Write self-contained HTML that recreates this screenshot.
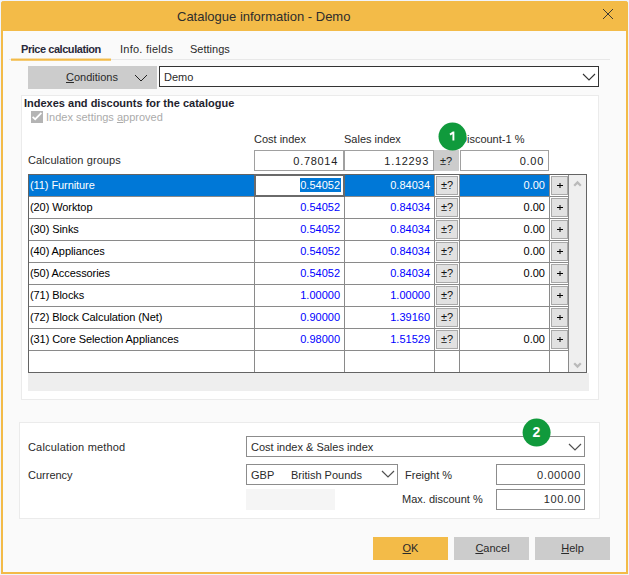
<!DOCTYPE html>
<html><head><meta charset="utf-8">
<style>
*{box-sizing:border-box;margin:0;padding:0}
html,body{width:629px;height:575px;overflow:hidden;background:#f0f4fc}
body{position:relative;font-family:"Liberation Sans",sans-serif;font-size:11px;color:#2a2a2a}
.a{position:absolute}
.t{position:absolute;white-space:nowrap;line-height:13px}
#win{left:1px;top:1px;width:627px;height:573px;background:#fafafa;border:2px solid #f3bb48;border-top:0;border-radius:3px 3px 0 0}
#title{left:1px;top:1px;width:627px;height:30px;background:#f3bb48;border-radius:3px 3px 0 0}
.panel{background:#fff;border:1px solid #ebebeb}
.btn{background:#ccc;text-align:center}
.inp{background:#fff;border:1px solid #8c8c8c}
.cell{position:absolute;overflow:hidden}
.num{text-align:right;padding-right:5px;color:#00f}
.pb{position:absolute;background:#e1e1e1;border:1px solid #a9a9a9;text-align:center;color:#111}
</style></head><body>
<div id="win" class="a"></div>
<div id="title" class="a"></div>
<div class="t" style="left:177px;top:10px;font-size:13px;line-height:13px;color:#2d2d2d">Catalogue information - Demo</div>
<svg class="a" style="left:602px;top:8px" width="12" height="12" viewBox="0 0 12 12"><path d="M1 1L11 11M11 1L1 11" stroke="#333" stroke-width="0.95" fill="none"/></svg>

<!-- tabs -->
<div class="a" style="left:9px;top:59px;width:601px;height:1px;background:#e8e8e8"></div>
<div class="a" style="left:11px;top:58px;width:100px;height:3px;background:linear-gradient(rgba(243,187,72,.45) 0 1px,#f3bb48 1px 2px,rgba(243,187,72,.75) 2px 3px)"></div>
<div class="t" style="left:21px;top:43px;font-weight:bold;letter-spacing:-0.45px;color:#2a2a3a">Price calculation</div>
<div class="t" style="left:120px;top:43px;letter-spacing:0.25px">Info. fields</div>
<div class="t" style="left:190px;top:43px">Settings</div>

<!-- conditions -->
<div class="a btn" style="left:28px;top:66px;width:129px;height:23px"></div>
<div class="t" style="left:66px;top:71px"><u>C</u>onditions</div>
<svg class="a" style="left:134px;top:73.5px" width="14" height="8" viewBox="0 0 14 8"><path d="M1 1L7 7L13 1" stroke="#222" stroke-width="1" fill="none"/></svg>
<div class="a inp" style="left:159px;top:66px;width:440px;height:21px;border-color:#333"></div>
<div class="t" style="left:164px;top:71px">Demo</div>
<svg class="a" style="left:582px;top:72.5px" width="14" height="8" viewBox="0 0 14 8"><path d="M1 1L7 7L13 1" stroke="#333" stroke-width="1.1" fill="none"/></svg>

<!-- panel 1 -->
<div class="a panel" style="left:21px;top:95px;width:578px;height:305px"></div>
<div class="t" style="left:24px;top:97px;font-weight:bold;color:#1e1e2e">Indexes and discounts for the catalogue</div>
<div class="a" style="left:31px;top:111px;width:12px;height:12px;background:#b4b4b4"></div>
<svg class="a" style="left:31px;top:111px" width="12" height="12" viewBox="0 0 12 12"><path d="M1.6 5.8L4.2 8.2L10.4 1.9" stroke="#fff" stroke-width="1.7" fill="none"/></svg>
<div class="t" style="left:46px;top:111px;color:#ababab">Index settings <u>a</u>pproved</div>

<div class="t" style="left:28px;top:154px;letter-spacing:0.1px">Calculation groups</div>
<div class="t" style="left:254px;top:133px">Cost index</div>
<div class="t" style="left:344px;top:133px">Sales index</div>
<div class="t" style="left:459px;top:133px">Discount-1 %</div>
<div class="a" style="left:254px;top:150px;width:90px;height:21px;background:#fff;border:1px solid #a0a0a0"></div>
<div class="a" style="left:344px;top:150px;width:90px;height:21px;background:#fff;border:1px solid #a0a0a0"></div>
<div class="a" style="left:434px;top:150px;width:25px;height:21px;background:#ccc"></div>
<div class="a" style="left:460px;top:150px;width:89px;height:21px;background:#fff;border:1px solid #a0a0a0"></div>
<div class="t" style="left:255px;top:155px;width:83px;text-align:right;color:#222;letter-spacing:0.7px">0.78014</div>
<div class="t" style="left:345px;top:155px;width:84px;text-align:right;color:#222;letter-spacing:0.7px">1.12293</div>
<div class="t" style="left:434px;top:155px;width:24px;text-align:center;color:#222">&plusmn;?</div>
<div class="t" style="left:460px;top:155px;width:84px;text-align:right;color:#222;letter-spacing:0.7px">0.00</div>
<svg class="a" style="left:0;top:0" width="629" height="575"><circle cx="452.5" cy="136.6" r="14" fill="#109a3c"/><path d="M453.4 131.6V140.6M453.4 132.2L450 134.6" stroke="#fff" stroke-width="1.9" fill="none"/></svg>
<div class="a" style="left:28px;top:174px;width:559px;height:199px;background:#fff"></div>
<div class="a" style="left:29px;top:175px;width:405px;height:21px;background:#0078d7"></div>
<div class="a" style="left:460px;top:175px;width:89px;height:21px;background:#0078d7"></div>
<div class="a" style="left:29px;top:196px;width:540px;height:1px;background:#8a8a8a"></div>
<div class="a" style="left:29px;top:218px;width:540px;height:1px;background:#8a8a8a"></div>
<div class="a" style="left:29px;top:240px;width:540px;height:1px;background:#8a8a8a"></div>
<div class="a" style="left:29px;top:262px;width:540px;height:1px;background:#8a8a8a"></div>
<div class="a" style="left:29px;top:284px;width:540px;height:1px;background:#8a8a8a"></div>
<div class="a" style="left:29px;top:306px;width:540px;height:1px;background:#8a8a8a"></div>
<div class="a" style="left:29px;top:328px;width:540px;height:1px;background:#8a8a8a"></div>
<div class="a" style="left:29px;top:350px;width:540px;height:1px;background:#8a8a8a"></div>
<div class="a" style="left:434px;top:196px;width:26px;height:1px;background:#8a8a8a"></div>
<div class="a" style="left:549px;top:196px;width:20px;height:1px;background:#8a8a8a"></div>
<div class="a" style="left:254px;top:197px;width:1px;height:176px;background:#8a8a8a"></div>
<div class="a" style="left:344px;top:197px;width:1px;height:176px;background:#8a8a8a"></div>
<div class="a" style="left:434px;top:175px;width:1px;height:198px;background:#8a8a8a"></div>
<div class="a" style="left:459px;top:175px;width:1px;height:198px;background:#8a8a8a"></div>
<div class="a" style="left:549px;top:175px;width:1px;height:198px;background:#8a8a8a"></div>
<div class="a" style="left:568px;top:175px;width:1px;height:198px;background:#8a8a8a"></div>
<div class="a" style="left:28px;top:174px;width:559px;height:199px;border:1px solid #646464"></div>
<div class="a" style="left:569px;top:175px;width:17px;height:197px;background:#efefef"></div>
<svg class="a" style="left:0;top:0" width="629" height="575"><path d="M574.2 185.8L577.5 182.5L580.8 185.8" stroke="#bababa" stroke-width="2.3" fill="none"/><path d="M574.2 363.2L577.5 366.5L580.8 363.2" stroke="#bababa" stroke-width="2.3" fill="none"/></svg>
<div class="a" style="left:28px;top:373px;width:561px;height:18px;background:#eee"></div>
<div class="a" style="left:254px;top:174px;width:91px;height:23px;background:#fff;border:2px solid #6a6a6a"></div>
<div class="a" style="left:300px;top:178px;width:41px;height:14px;background:#0078d7"></div>
<div class="t" style="left:30px;top:179px;color:#fff;letter-spacing:-0.08px">(11) Furniture</div>
<div class="t" style="left:255px;top:179px;width:85px;text-align:right;color:#fff">0.54052</div>
<div class="t" style="left:345px;top:179px;width:85px;text-align:right;color:#fff">0.84034</div>
<div class="t" style="left:460px;top:179px;width:85px;text-align:right;color:#fff">0.00</div>
<div class="pb" style="left:436px;top:176px;width:22px;height:19px;line-height:16px">&plusmn;?</div>
<div class="pb" style="left:551px;top:176px;width:17px;height:19px"></div>
<svg class="a" style="left:556px;top:182px" width="8" height="8" viewBox="0 0 8 8"><path d="M1 3.5H7M4 1V6" stroke="#000" stroke-width="1" fill="none"/></svg>
<div class="t" style="left:30px;top:201px;color:#000;letter-spacing:-0.08px">(20) Worktop</div>
<div class="t" style="left:255px;top:201px;width:85px;text-align:right;color:#00f">0.54052</div>
<div class="t" style="left:345px;top:201px;width:85px;text-align:right;color:#00f">0.84034</div>
<div class="t" style="left:460px;top:201px;width:85px;text-align:right;color:#000">0.00</div>
<div class="pb" style="left:436px;top:198px;width:22px;height:19px;line-height:16px">&plusmn;?</div>
<div class="pb" style="left:551px;top:198px;width:17px;height:19px"></div>
<svg class="a" style="left:556px;top:204px" width="8" height="8" viewBox="0 0 8 8"><path d="M1 3.5H7M4 1V6" stroke="#000" stroke-width="1" fill="none"/></svg>
<div class="t" style="left:30px;top:223px;color:#000;letter-spacing:-0.08px">(30) Sinks</div>
<div class="t" style="left:255px;top:223px;width:85px;text-align:right;color:#00f">0.54052</div>
<div class="t" style="left:345px;top:223px;width:85px;text-align:right;color:#00f">0.84034</div>
<div class="t" style="left:460px;top:223px;width:85px;text-align:right;color:#000">0.00</div>
<div class="pb" style="left:436px;top:220px;width:22px;height:19px;line-height:16px">&plusmn;?</div>
<div class="pb" style="left:551px;top:220px;width:17px;height:19px"></div>
<svg class="a" style="left:556px;top:226px" width="8" height="8" viewBox="0 0 8 8"><path d="M1 3.5H7M4 1V6" stroke="#000" stroke-width="1" fill="none"/></svg>
<div class="t" style="left:30px;top:245px;color:#000;letter-spacing:-0.08px">(40) Appliances</div>
<div class="t" style="left:255px;top:245px;width:85px;text-align:right;color:#00f">0.54052</div>
<div class="t" style="left:345px;top:245px;width:85px;text-align:right;color:#00f">0.84034</div>
<div class="t" style="left:460px;top:245px;width:85px;text-align:right;color:#000">0.00</div>
<div class="pb" style="left:436px;top:242px;width:22px;height:19px;line-height:16px">&plusmn;?</div>
<div class="pb" style="left:551px;top:242px;width:17px;height:19px"></div>
<svg class="a" style="left:556px;top:248px" width="8" height="8" viewBox="0 0 8 8"><path d="M1 3.5H7M4 1V6" stroke="#000" stroke-width="1" fill="none"/></svg>
<div class="t" style="left:30px;top:267px;color:#000;letter-spacing:-0.08px">(50) Accessories</div>
<div class="t" style="left:255px;top:267px;width:85px;text-align:right;color:#00f">0.54052</div>
<div class="t" style="left:345px;top:267px;width:85px;text-align:right;color:#00f">0.84034</div>
<div class="t" style="left:460px;top:267px;width:85px;text-align:right;color:#000">0.00</div>
<div class="pb" style="left:436px;top:264px;width:22px;height:19px;line-height:16px">&plusmn;?</div>
<div class="pb" style="left:551px;top:264px;width:17px;height:19px"></div>
<svg class="a" style="left:556px;top:270px" width="8" height="8" viewBox="0 0 8 8"><path d="M1 3.5H7M4 1V6" stroke="#000" stroke-width="1" fill="none"/></svg>
<div class="t" style="left:30px;top:289px;color:#000;letter-spacing:-0.08px">(71) Blocks</div>
<div class="t" style="left:255px;top:289px;width:85px;text-align:right;color:#00f">1.00000</div>
<div class="t" style="left:345px;top:289px;width:85px;text-align:right;color:#00f">1.00000</div>
<div class="pb" style="left:436px;top:286px;width:22px;height:19px;line-height:16px">&plusmn;?</div>
<div class="pb" style="left:551px;top:286px;width:17px;height:19px"></div>
<svg class="a" style="left:556px;top:292px" width="8" height="8" viewBox="0 0 8 8"><path d="M1 3.5H7M4 1V6" stroke="#000" stroke-width="1" fill="none"/></svg>
<div class="t" style="left:30px;top:311px;color:#000;letter-spacing:-0.08px">(72) Block Calculation (Net)</div>
<div class="t" style="left:255px;top:311px;width:85px;text-align:right;color:#00f">0.90000</div>
<div class="t" style="left:345px;top:311px;width:85px;text-align:right;color:#00f">1.39160</div>
<div class="pb" style="left:436px;top:308px;width:22px;height:19px;line-height:16px">&plusmn;?</div>
<div class="pb" style="left:551px;top:308px;width:17px;height:19px"></div>
<svg class="a" style="left:556px;top:314px" width="8" height="8" viewBox="0 0 8 8"><path d="M1 3.5H7M4 1V6" stroke="#000" stroke-width="1" fill="none"/></svg>
<div class="t" style="left:30px;top:333px;color:#000;letter-spacing:-0.08px">(31) Core Selection Appliances</div>
<div class="t" style="left:255px;top:333px;width:85px;text-align:right;color:#00f">0.98000</div>
<div class="t" style="left:345px;top:333px;width:85px;text-align:right;color:#00f">1.51529</div>
<div class="t" style="left:460px;top:333px;width:85px;text-align:right;color:#000">0.00</div>
<div class="pb" style="left:436px;top:330px;width:22px;height:19px;line-height:16px">&plusmn;?</div>
<div class="pb" style="left:551px;top:330px;width:17px;height:19px"></div>
<svg class="a" style="left:556px;top:336px" width="8" height="8" viewBox="0 0 8 8"><path d="M1 3.5H7M4 1V6" stroke="#000" stroke-width="1" fill="none"/></svg><div class="a panel" style="left:19px;top:422px;width:581px;height:97px"></div>
<div class="t" style="left:28px;top:441px;letter-spacing:0.18px">Calculation method</div>
<div class="t" style="left:28px;top:469px">Currency</div>
<div class="a inp" style="left:246px;top:436px;width:339px;height:21px"></div>
<div class="t" style="left:251px;top:441px">Cost index &amp; Sales index</div>
<svg class="a" style="left:568px;top:442.5px" width="14" height="8" viewBox="0 0 14 8"><path d="M1 1L7 7L13 1" stroke="#505050" stroke-width="1.2" fill="none"/></svg>
<div class="a inp" style="left:246px;top:464px;width:152px;height:21px"></div>
<div class="t" style="left:251px;top:469px">GBP</div>
<div class="t" style="left:291px;top:469px">British Pounds</div>
<svg class="a" style="left:381px;top:469.8px" width="14" height="8" viewBox="0 0 14 8"><path d="M1 1L7 7L13 1" stroke="#505050" stroke-width="1.2" fill="none"/></svg>
<div class="a" style="left:246px;top:489px;width:89px;height:21px;background:#f5f5f5"></div>
<div class="t" style="left:405px;top:469px">Freight %</div>
<div class="t" style="left:402px;top:493px">Max. discount %</div>
<div class="a inp" style="left:496px;top:464px;width:89px;height:21px"></div>
<div class="a inp" style="left:496px;top:489px;width:89px;height:21px"></div>
<div class="t" style="left:497px;top:469px;width:84px;text-align:right;letter-spacing:0.6px">0.00000</div>
<div class="t" style="left:497px;top:493px;width:84px;text-align:right;letter-spacing:0.6px">100.00</div>
<svg class="a" style="left:0;top:0" width="629" height="575"><circle cx="536.6" cy="432.6" r="14" fill="#109a3c"/></svg>
<div class="t" style="left:523px;top:426px;width:27px;text-align:center;color:#fff;font-size:14px;font-weight:bold">2</div>
<!-- buttons -->
<div class="a btn" style="left:373px;top:537px;width:75px;height:23px;background:#f3bb48"></div>
<div class="t" style="left:373px;top:542px;width:75px;text-align:center"><u>O</u>K</div>
<div class="a btn" style="left:454px;top:537px;width:75px;height:23px"></div>
<div class="t" style="left:455px;top:542px;width:75px;text-align:center"><u>C</u>ancel</div>
<div class="a btn" style="left:535px;top:537px;width:75px;height:23px"></div>
<div class="t" style="left:535px;top:542px;width:75px;text-align:center"><u>H</u>elp</div>
</body></html>
